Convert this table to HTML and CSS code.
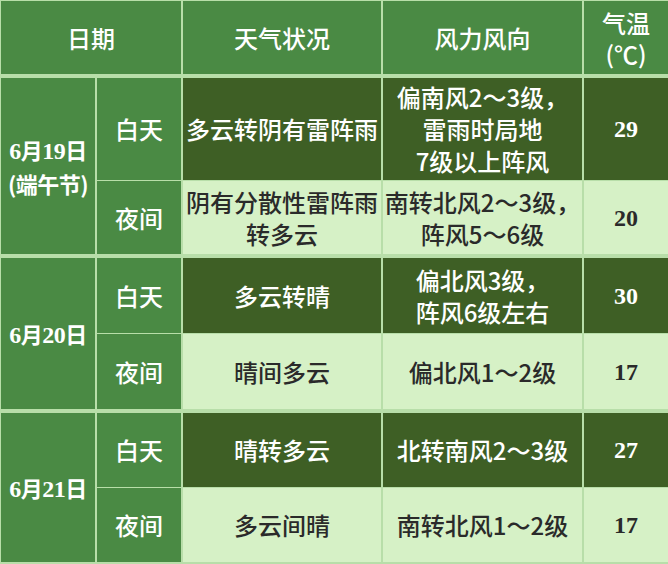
FILE: index.html
```html
<!DOCTYPE html>
<html lang="zh-CN">
<head>
<meta charset="utf-8">
<title>天气预报</title>
<link rel="stylesheet" href="styles.css">
</head>
<body>
<div class="table">
  <div class="row head">
    <div class="cell hd span2">日期</div>
    <div class="cell hd">天气状况</div>
    <div class="cell hd">风力风向</div>
    <div class="cell hd temp-hd"><div>气温<br>(℃)</div></div>
  </div>

  <div class="group g1">
    <div class="cell date"><div><span class="num">6</span>月<span class="num">19</span>日<br>(端午节)</div></div>
    <div class="cell label">白天</div>
    <div class="cell dark">多云转阴有雷阵雨</div>
    <div class="cell dark">偏南风2～3级，<br>雷雨时局地<br>7级以上阵风</div>
    <div class="cell dark t">29</div>
    <div class="cell label">夜间</div>
    <div class="cell light">阴有分散性雷阵雨<br>转多云</div>
    <div class="cell light">南转北风2～3级，<br>阵风5～6级</div>
    <div class="cell light t">20</div>
  </div>

  <div class="group g2">
    <div class="cell date"><div><span class="num">6</span>月<span class="num">20</span>日</div></div>
    <div class="cell label">白天</div>
    <div class="cell dark">多云转晴</div>
    <div class="cell dark">偏北风3级，<br>阵风6级左右</div>
    <div class="cell dark t">30</div>
    <div class="cell label">夜间</div>
    <div class="cell light">晴间多云</div>
    <div class="cell light">偏北风1～2级</div>
    <div class="cell light t">17</div>
  </div>

  <div class="group g3">
    <div class="cell date"><div><span class="num">6</span>月<span class="num">21</span>日</div></div>
    <div class="cell label">白天</div>
    <div class="cell dark">晴转多云</div>
    <div class="cell dark">北转南风2～3级</div>
    <div class="cell dark t">27</div>
    <div class="cell label">夜间</div>
    <div class="cell light">多云间晴</div>
    <div class="cell light">南转北风1～2级</div>
    <div class="cell light t">17</div>
  </div>
</div>
</body>
</html>
```

FILE: styles.css
```css
html, body {
  margin: 0;
  padding: 0;
  background: #b8dea9;
}

.table {
  width: 668px;
  height: 564px;
  box-sizing: border-box;
  padding: 1px 0 2px 1px;
  display: flex;
  flex-direction: column;
  gap: 4px;
  background: #b8dea9;
  font-family: "Noto Sans CJK SC", "Noto Sans", sans-serif;
  font-size: 24px;
  font-weight: 500;
}

.row,
.group {
  display: grid;
  grid-template-columns: 94px 84px 198px 199px 84px;
  column-gap: 2px;
  row-gap: 1px;
}

.head {
  grid-template-rows: 73px;
}

.g1 { grid-template-rows: 102px 73px; }
.g2 { grid-template-rows: 75px 75px; }
.g3 { grid-template-rows: 74px 74px; }

.cell {
  display: flex;
  align-items: center;
  justify-content: center;
  text-align: center;
  line-height: 32px;
  white-space: nowrap;
}

.hd {
  background: #4a8a44;
  color: #ffffff;
}

.span2 {
  grid-column: span 2;
}

.temp-hd {
  line-height: 31px;
}

.date {
  grid-row: span 2;
  background: #4a8a44;
  color: #ffffff;
  font-weight: 600;
  font-size: 22px;
  letter-spacing: -0.5px;
}

.num {
  font-family: "Liberation Serif", serif;
  font-weight: 700;
  font-size: 24px;
}

.label {
  background: #4a8a44;
  color: #ffffff;
}

.dark {
  background: #3e5f25;
  color: #ffffff;
}

.light {
  background: #d6f1c6;
  color: #2a2a2a;
}

.t {
  font-family: "Liberation Serif", serif;
  font-weight: 700;
  font-size: 24px;
}
```
